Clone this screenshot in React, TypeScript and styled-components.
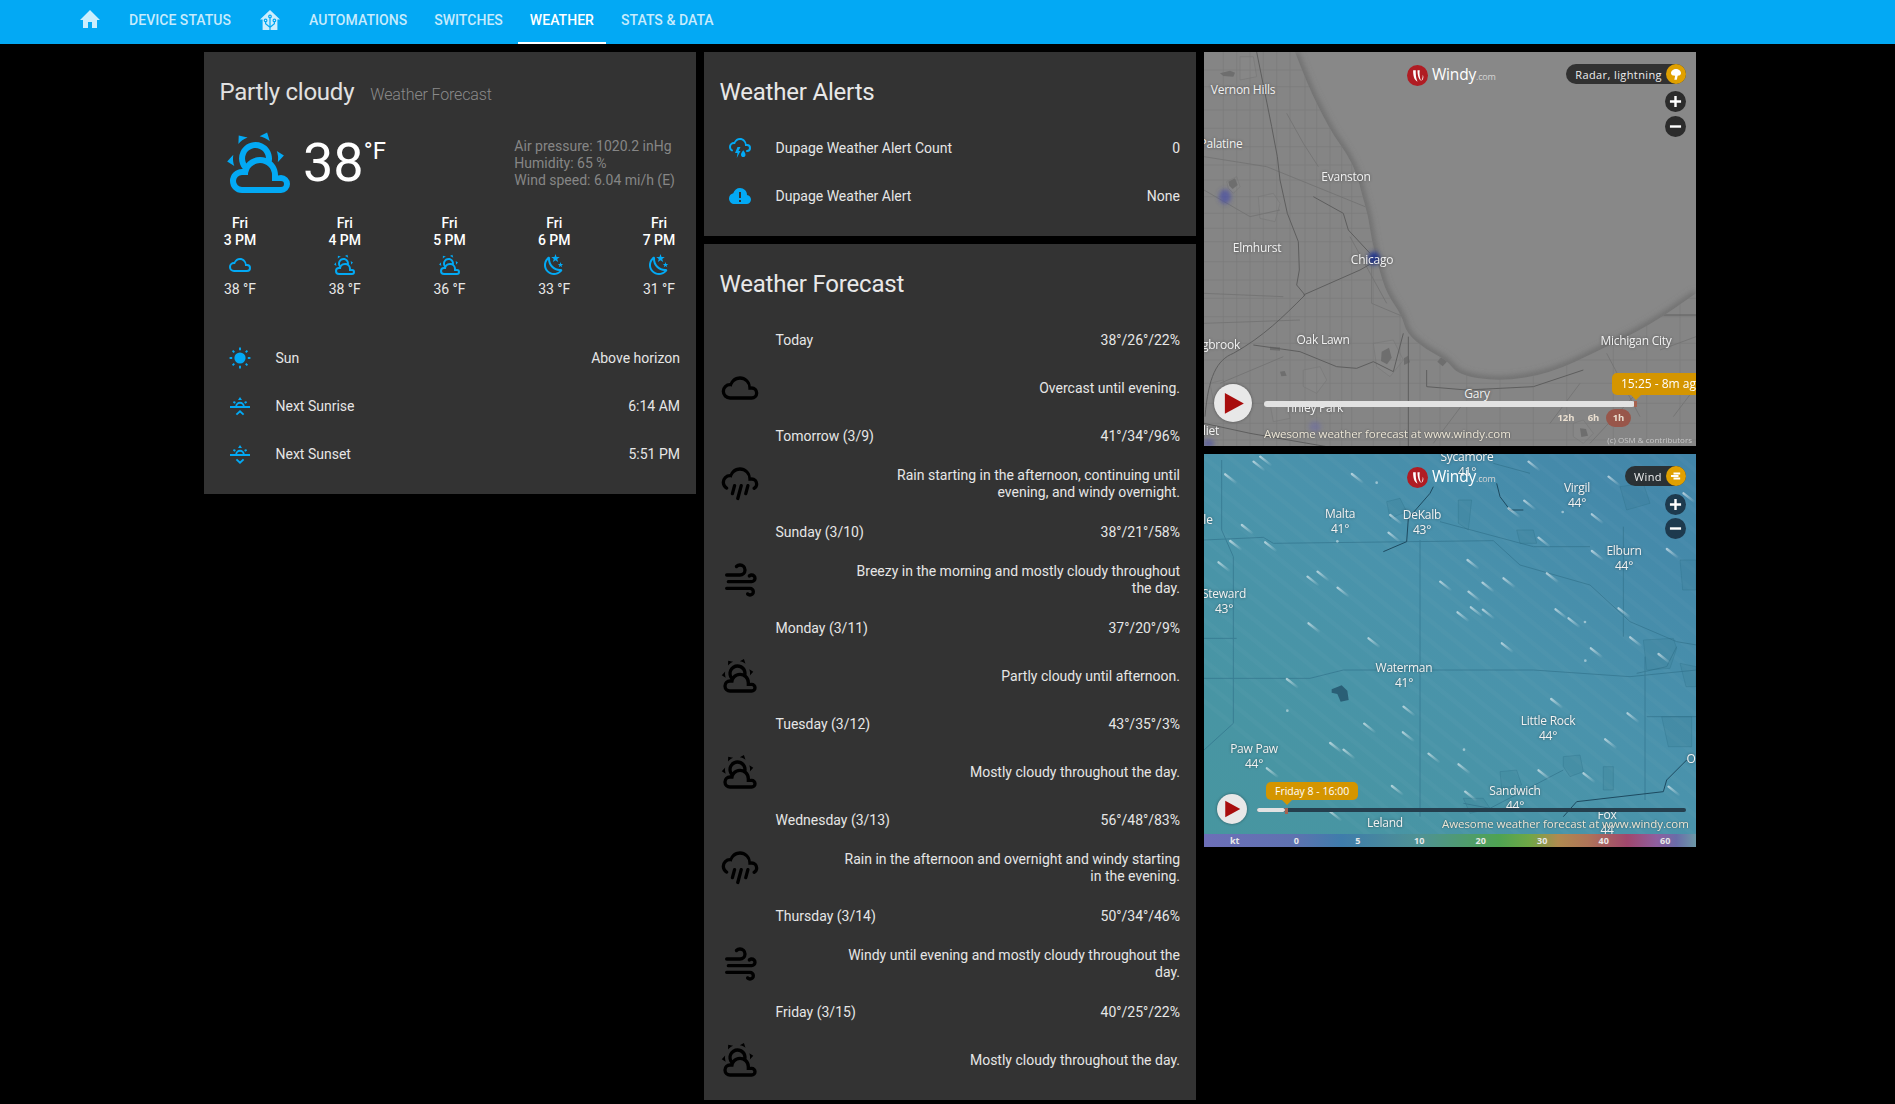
import React from 'react'
import styled, { createGlobalStyle } from 'styled-components'

const GlobalStyle = createGlobalStyle`
  html, body {
    margin: 0;
    padding: 0;
    background: #000;
    overflow: hidden;
    font-family: Roboto, "Liberation Sans", sans-serif;
  }
`

const Page = styled.div`
  width: 1895px;
  height: 1104px;
  background: #000;
  color: #e1e1e1;
`

const Header = styled.div`
  height: 44px;
  padding-left: 66px;
  background: #03a9f4;
  display: flex;
  gap: 3px;
`

const Tab = styled.div<{ $active?: boolean }>`
  box-sizing: border-box;
  height: 44px;
  padding: 0 12px 2px;
  display: flex;
  align-items: center;
  font-size: 14px;
  font-weight: 500;
  letter-spacing: 0.04px;
  text-transform: uppercase;
  color: ${p => (p.$active ? '#fff' : 'rgba(255, 255, 255, 0.78)')};
  border-bottom: 2px solid ${p => (p.$active ? '#fff' : 'transparent')};
  svg {
    display: block;
    width: 24px;
    height: 24px;
    fill: rgba(255, 255, 255, 0.8);
  }
`

const Columns = styled.div`
  display: grid;
  grid-template-columns: repeat(3, 492px);
  gap: 8px;
  padding: 8px 0 0 204px;
`

const Column = styled.div`
  display: flex;
  flex-direction: column;
  gap: 8px;
`

const Card = styled.div`
  background: #333;
  padding-bottom: 16px;
`

const CardTitle = styled.div`
  padding: 24px 16px 16px 15.5px;
  font-size: 24px;
  letter-spacing: -0.2px;
  line-height: 32px;
  color: #e8e8e8;
`

const WeatherHead = styled.div`
  display: flex;
  align-items: baseline;
  padding: 24px 16px 0 15.5px;
  line-height: 32px;
`

const Condition = styled.div`
  font-size: 24px;
  letter-spacing: -0.25px;
  color: #e1e1e1;
`

const WeatherName = styled.div`
  margin-left: 16px;
  font-size: 16px;
  letter-spacing: -0.15px;
  font-weight: 300;
  color: #8a8a8a;
`

const WeatherMain = styled.div`
  display: flex;
  align-items: center;
  height: 72px;
  margin-top: 16px;
  padding: 0 21px 0 20px;
`

const BigIcon = styled.svg`
  width: 72px;
  height: 72px;
  fill: #03a9f4;
`

const BigTemp = styled.div`
  margin-left: 7px;
  font-size: 54px;
  font-weight: 400;
  line-height: 64px;
  color: #fff;
`

const BigUnit = styled.sup`
  font-size: 24px;
  line-height: 0;
  vertical-align: 22px;
`

const Attributes = styled.div`
  margin-left: auto;
  font-size: 14px;
  font-weight: 400;
  line-height: 17px;
  color: #868686;
`

const Hourly = styled.div`
  display: flex;
  justify-content: space-between;
  margin-top: 16px;
  padding: 0 16px 0 15px;
`

const Hour = styled.div`
  display: flex;
  flex-direction: column;
  align-items: center;
  width: 42px;
  font-size: 14px;
  line-height: 17px;
`

const HourLabel = styled.div`
  font-weight: 500;
  color: #fff;
  text-align: center;
  white-space: nowrap;
`

const HourIcon = styled.svg`
  width: 24px;
  height: 24px;
  margin-top: 4px;
  fill: #03a9f4;
`

const HourTemp = styled.div`
  margin-top: 4px;
  color: #e8e8e8;
  white-space: nowrap;
`

const Rows = styled.div`
  padding: 0 16px;
`

const SunRows = styled(Rows)`
  margin-top: 36px;
`

const Row = styled.div`
  display: flex;
  align-items: center;
  height: 48px;
  font-size: 14px;
  line-height: 17px;
  color: #e6e6e6;
`

const RowIcon = styled.div<{ $dark?: boolean }>`
  flex: 0 0 40px;
  display: flex;
  justify-content: center;
  svg {
    width: ${p => (p.$dark ? '40px' : '24px')};
    height: ${p => (p.$dark ? '40px' : '24px')};
    fill: ${p => (p.$dark ? '#000' : '#03a9f4')};
  }
`

const RowName = styled.div`
  flex: 1;
  margin-left: 15.5px;
  white-space: nowrap;
`

const RowValue = styled.div`
  max-width: 336px;
  text-align: right;
`

const MapFrame = styled.div<{ $height: number }>`
  position: relative;
  overflow: hidden;
  height: ${p => p.$height}px;
  font-family: "Open Sans", sans-serif;
  svg.map {
    display: block;
    width: 100%;
    height: 100%;
  }
`

const MapLabel = styled.div<{ $x: number; $y: number }>`
  position: absolute;
  left: ${p => p.$x}px;
  top: ${p => p.$y}px;
  transform: translate(-50%, -50%);
  font-size: 12px;
  letter-spacing: -0.25px;
  line-height: 15px;
  text-align: center;
  white-space: pre;
  color: #f1f1f1;
  text-shadow: 0 0 3px rgba(0, 0, 0, 0.45);
`

const Logo = styled.div<{ $top: number }>`
  position: absolute;
  left: 203px;
  top: ${p => p.$top}px;
  display: flex;
  align-items: baseline;
  color: #fff;
  font-size: 15.5px;
  letter-spacing: -0.2px;
  line-height: 22px;
  svg {
    align-self: center;
    width: 21px;
    height: 21px;
    margin-right: 4px;
  }
  small {
    font-size: 9px;
    color: #d5d5d5;
  }
`

const LayerPill = styled.div<{ $top: number }>`
  position: absolute;
  right: 10px;
  top: ${p => p.$top}px;
  height: 20px;
  display: flex;
  align-items: center;
  padding-left: 9px;
  border-radius: 10px;
  background: rgba(40, 40, 40, 0.9);
  color: #eee;
  font-size: 11px;
  letter-spacing: 0.4px;
  svg {
    width: 20px;
    height: 20px;
    margin-left: 4px;
  }
`

const ZoomButton = styled.div<{ $top: number; $bg: string }>`
  position: absolute;
  right: 10px;
  top: ${p => p.$top}px;
  width: 21px;
  height: 21px;
  border-radius: 50%;
  background: ${p => p.$bg};
  display: flex;
  align-items: center;
  justify-content: center;
  svg {
    width: 13px;
    height: 13px;
  }
`

const PlayButton = styled.div<{ $x: number; $y: number; $size: number }>`
  position: absolute;
  left: ${p => p.$x}px;
  top: ${p => p.$y}px;
  width: ${p => p.$size}px;
  height: ${p => p.$size}px;
  border-radius: 50%;
  background: #e8e8e8;
  box-shadow: 0 0 3px rgba(0, 0, 0, 0.4);
  display: flex;
  align-items: center;
  justify-content: center;
  svg {
    width: 60%;
    height: 60%;
  }
`

const Track = styled.div<{ $x: number; $y: number; $w: number; $h: number; $bg: string }>`
  position: absolute;
  left: ${p => p.$x}px;
  top: ${p => p.$y}px;
  width: ${p => p.$w}px;
  height: ${p => p.$h}px;
  border-radius: ${p => p.$h / 2}px;
  background: ${p => p.$bg};
`

const TimeBubble = styled.div<{ $x: number; $y: number; $size: number; $height: number; $arrow: number }>`
  position: absolute;
  left: ${p => p.$x}px;
  top: ${p => p.$y}px;
  padding: 0 9px;
  height: ${p => p.$height}px;
  line-height: ${p => p.$height}px;
  border-radius: 5px;
  background: #d49500;
  color: #fff;
  font-size: ${p => p.$size}px;
  white-space: nowrap;
  &::after {
    content: '';
    position: absolute;
    left: ${p => p.$arrow}px;
    bottom: -5px;
    border: 5px solid transparent;
    border-bottom: 0;
    border-top-color: #d49500;
  }
`

const Marker = styled.div<{ $x: number; $y: number }>`
  position: absolute;
  left: ${p => p.$x}px;
  top: ${p => p.$y}px;
  width: 3px;
  height: 6px;
  background: #a5624f;
`

const RangeRow = styled.div`
  position: absolute;
  left: 347px;
  top: 357px;
  display: flex;
  align-items: center;
  color: #eadfd0;
  font-size: 9.5px;
  font-weight: 700;
`

const RangeItem = styled.div<{ $w: number; $active?: boolean }>`
  width: ${p => p.$w}px;
  height: 18px;
  line-height: 18px;
  text-align: center;
  border-radius: 9px;
  background: ${p => (p.$active ? '#98564a' : 'transparent')};
`

const Promo = styled.div<{ $x: number; $y: number }>`
  position: absolute;
  left: ${p => p.$x}px;
  top: ${p => p.$y}px;
  font-size: 11.5px;
  letter-spacing: -0.07px;
  line-height: 14px;
  color: #ece6d6;
  white-space: nowrap;
  text-shadow: 0 0 2px rgba(0, 0, 0, 0.5);
`

const Attribution = styled.div`
  position: absolute;
  right: 4px;
  bottom: 0;
  font-size: 8px;
  line-height: 12px;
  color: #c8c8c8;
`

const Legend = styled.div`
  position: absolute;
  left: 0;
  right: 0;
  bottom: 0;
  height: 13px;
  display: flex;
  background: linear-gradient(90deg, #6d6fb8 0%, #5f72b0 18%, #3f7cab 28%, #4f9293 44%, #4fa352 60%, #6ea846 66%, #b08a50 72%, #ae7458 78%, #a0476d 86%, #8f5f9f 92%, #6a6ca8 96%, #6d99a8 100%);
`

const LegendItem = styled.div`
  flex: 1;
  font-size: 9px;
  font-weight: 700;
  line-height: 13px;
  text-align: center;
  color: #e8e8e8;
`

const P = {
  home: 'M10,20V14H14V20H19V12H22L12,2L2,12H5V20H10Z',
  partly:
    'M12.74,5.47C15.1,6.5 16.35,9.03 15.92,11.46C17.19,12.56 18,14.19 18,16V16.17C18.31,16.06 18.65,16 19,16A3,3 0 0,1 22,19A3,3 0 0,1 19,22H6A4,4 0 0,1 2,18A4,4 0 0,1 6,14H6.27C5,12.45 4.6,10.24 5.5,8.26C6.72,5.5 9.97,4.24 12.74,5.47M11.93,7.3C10.16,6.5 8.09,7.31 7.31,9.07C6.85,10.09 6.93,11.22 7.41,12.13C8.5,10.83 10.16,10 12,10C12.7,10 13.38,10.12 14,10.34C13.94,9.06 13.18,7.86 11.93,7.3M13.55,3.64C13,3.4 12.45,3.23 11.88,3.12L14.37,1.82L15.27,4.71C14.76,4.29 14.19,3.93 13.55,3.64M6.09,4.44C5.6,4.79 5.17,5.19 4.8,5.63L4.91,2.82L7.87,3.5C7.25,3.71 6.65,4.03 6.09,4.44M18,9.71C17.91,9.12 17.78,8.55 17.59,8L19.97,9.5L17.92,11.73C18.03,11.08 18.05,10.4 18,9.71M3.04,11.3C3.11,11.9 3.24,12.47 3.43,13L1.06,11.5L3.1,9.28C3,9.93 2.97,10.61 3.04,11.3M19,18H16V16A4,4 0 0,0 12,12A4,4 0 0,0 8,16H6A2,2 0 0,0 4,18A2,2 0 0,0 6,20H19A1,1 0 0,0 20,19A1,1 0 0,0 19,18Z',
  cloudy:
    'M6,19A5,5 0 0,1 1,14A5,5 0 0,1 6,9C7,6.65 9.3,5 12,5C15.43,5 18.24,7.66 18.5,11.03L19,11A4,4 0 0,1 23,15A4,4 0 0,1 19,19H6M19,13H17V12A5,5 0 0,0 12,7C9.5,7 7.45,8.82 7.06,11.19C6.73,11.07 6.37,11 6,11A3,3 0 0,0 3,14A3,3 0 0,0 6,17H19A2,2 0 0,0 21,15A2,2 0 0,0 19,13Z',
  night:
    'M17.75,4.09L15.22,6.03L16.13,9.09L13.5,7.28L10.87,9.09L11.78,6.03L9.25,4.09L12.44,4L13.5,1L14.56,4L17.75,4.09M21.25,11L19.61,12.25L20.2,14.23L18.5,13.06L16.8,14.23L17.39,12.25L15.75,11L17.81,10.95L18.5,9L19.19,10.95L21.25,11M18.97,15.95C19.8,15.87 20.69,17.05 20.16,17.8C19.84,18.25 19.5,18.67 19.08,19.07C15.17,23 8.84,23 4.94,19.07C1.03,15.17 1.03,8.83 4.94,4.93C5.34,4.53 5.76,4.17 6.21,3.85C6.96,3.32 8.14,4.21 8.06,5.04C7.79,7.9 8.75,10.87 10.95,13.06C13.14,15.26 16.1,16.22 18.97,15.95M17.33,17.97C14.5,17.81 11.7,16.64 9.53,14.5C7.36,12.31 6.2,9.5 6.04,6.68C3.23,9.82 3.34,14.64 6.35,17.66C9.37,20.67 14.19,20.78 17.33,17.97Z',
  pouring:
    'M9,12C9.53,12.14 9.85,12.69 9.71,13.22L8.41,18.05C8.27,18.59 7.72,18.9 7.19,18.76C6.65,18.62 6.34,18.07 6.5,17.54L7.78,12.71C7.92,12.17 8.47,11.86 9,12M13,12C13.53,12.14 13.85,12.69 13.71,13.22L11.64,20.95C11.5,21.5 10.95,21.8 10.41,21.66C9.88,21.5 9.56,20.97 9.7,20.43L11.78,12.71C11.92,12.17 12.47,11.86 13,12M17,12C17.53,12.14 17.85,12.69 17.71,13.22L16.41,18.05C16.27,18.59 15.72,18.9 15.19,18.76C14.65,18.62 14.34,18.07 14.5,17.54L15.78,12.71C15.92,12.17 16.47,11.86 17,12M17,10V9A5,5 0 0,0 12,4C9.5,4 7.45,5.82 7.06,8.19C6.73,8.07 6.37,8 6,8A3,3 0 0,0 3,11C3,12.11 3.6,13.08 4.5,13.6V13.59C5,13.87 5.14,14.5 4.87,14.96C4.59,15.43 4,15.6 3.5,15.32V15.33C2,14.47 1,12.85 1,11A5,5 0 0,1 6,6C7,3.65 9.3,2 12,2C15.43,2 18.24,4.66 18.5,8.03L19,8A4,4 0 0,1 23,12C23,13.5 22.2,14.77 21,15.46V15.46C20.5,15.73 19.91,15.57 19.63,15.09C19.36,14.61 19.5,14 20,13.72V13.73C20.6,13.39 21,12.74 21,12A2,2 0 0,0 19,10H17Z',
  windy:
    'M4,10A1,1 0 0,1 3,9A1,1 0 0,1 4,8H12A2,2 0 0,0 14,6A2,2 0 0,0 12,4C11.45,4 10.95,4.22 10.59,4.59C10.2,5 9.56,5 9.17,4.59C8.78,4.2 8.78,3.56 9.17,3.17C9.9,2.45 10.9,2 12,2A4,4 0 0,1 16,6A4,4 0 0,1 12,10H4M19,12A1,1 0 0,0 20,11A1,1 0 0,0 19,10C18.72,10 18.47,10.11 18.29,10.29C17.9,10.68 17.27,10.68 16.88,10.29C16.5,9.9 16.5,9.27 16.88,8.88C17.42,8.34 18.17,8 19,8A3,3 0 0,1 22,11A3,3 0 0,1 19,14H5A1,1 0 0,1 4,13A1,1 0 0,1 5,12H19M18,18H4A1,1 0 0,1 3,17A1,1 0 0,1 4,16H18A3,3 0 0,1 21,19A3,3 0 0,1 18,22C17.17,22 16.42,21.66 15.88,21.12C15.5,20.73 15.5,20.1 15.88,19.71C16.27,19.32 16.9,19.32 17.29,19.71C17.47,19.89 17.72,20 18,20A1,1 0 0,0 19,19A1,1 0 0,0 18,18Z',
  storm:
    'M4.5,13.59C5,13.87 5.14,14.5 4.87,14.96C4.59,15.44 4,15.6 3.5,15.33V15.33C2,14.47 1,12.85 1,11A5,5 0 0,1 6,6C7,3.65 9.3,2 12,2C15.43,2 18.24,4.66 18.5,8.03L19,8A4,4 0 0,1 23,12A4,4 0 0,1 19,16A1,1 0 0,1 18,15A1,1 0 0,1 19,14A2,2 0 0,0 21,12A2,2 0 0,0 19,10H17V9A5,5 0 0,0 12,4C9.5,4 7.45,5.82 7.06,8.19C6.73,8.07 6.37,8 6,8A3,3 0 0,0 3,11C3,12.11 3.6,13.08 4.5,13.6V13.59M9.5,11H12.5L10.5,15H12.5L8.75,22L9.5,17H7L9.5,11M17.5,18.67C17.5,19.96 16.5,21 15.25,21C14,21 13,19.96 13,18.67C13,17 15.25,14.25 15.25,14.25C15.25,14.25 17.5,17 17.5,18.67Z',
  cloudAlert:
    'M6.5,20C4.98,20 3.68,19.48 2.61,18.43C1.54,17.38 1,16.1 1,14.58C1,13.28 1.39,12.12 2.17,11.1C2.95,10.08 3.98,9.43 5.25,9.15C5.67,7.62 6.5,6.38 7.75,5.43C9,4.48 10.42,4 12,4C13.95,4 15.6,4.68 16.96,6.04C18.32,7.4 19,9.05 19,11C20.15,11.13 21.1,11.63 21.86,12.5C22.62,13.35 23,14.35 23,15.5C23,16.75 22.56,17.81 21.69,18.69C20.82,19.56 19.75,20 18.5,20H6.5M11,8V14H13V8H11M11,16V18H13V16H11Z',
}

const Icon = ({ d }: { d: string }) => (
  <svg viewBox="0 0 24 24">
    <path d={d} fillRule="evenodd" />
  </svg>
)

const HomeAutomationIcon = () => (
  <svg viewBox="0 0 24 24">
    <path d="M12 2L2 11.6H4.6V22H19.4V11.6H22Z" />
    <g fill="none" stroke="#03a9f4" strokeWidth="1.2">
      <circle cx="12" cy="8.4" r="1.3" />
      <circle cx="7.6" cy="12.4" r="1.3" />
      <circle cx="16.4" cy="12.4" r="1.3" />
      <path d="M12 9.7V22M7.6 13.7V15.6L11.6 19M16.4 13.7V15.6L12.4 19" />
    </g>
  </svg>
)

const SunIcon = () => (
  <svg viewBox="0 0 24 24">
    <circle cx="12" cy="12" r="5.6" />
    <g stroke="#03a9f4" strokeWidth="1.9">
      <path d="M12 1.6V4.2M12 19.8V22.4M1.6 12H4.2M19.8 12H22.4M4.6 4.6L6.3 6.3M17.7 17.7L19.4 19.4M4.6 19.4L6.3 17.7M17.7 6.3L19.4 4.6" />
    </g>
  </svg>
)

const SunsetIcon = ({ up }: { up?: boolean }) => (
  <svg viewBox="0 0 24 24">
    <g stroke="#03a9f4" strokeWidth="1.9" fill="none">
      <path d="M2 13H22" strokeWidth="2" />
      <path d="M8.2 12.5A3.8 3.8 0 0 1 15.8 12.5" />
      <path d="M5.4 7.8L7.4 8.9M18.6 7.8L16.6 8.9" />
      <path d={up ? 'M8.4 20.6L12 17.2L15.6 20.6' : 'M8.4 17.4L12 20.8L15.6 17.4'} />
    </g>
    <path d="M12 3L14 6H10Z" />
  </svg>
)

const hours = [
  { time: '3 PM', icon: P.cloudy, temp: '38 °F' },
  { time: '4 PM', icon: P.partly, temp: '38 °F' },
  { time: '5 PM', icon: P.partly, temp: '36 °F' },
  { time: '6 PM', icon: P.night, temp: '33 °F' },
  { time: '7 PM', icon: P.night, temp: '31 °F' },
]

const forecast = [
  { day: 'Today', temps: '38°/26°/22%', icon: P.cloudy, text: 'Overcast until evening.' },
  { day: 'Tomorrow (3/9)', temps: '41°/34°/96%', icon: P.pouring, text: 'Rain starting in the afternoon, continuing until evening, and windy overnight.' },
  { day: 'Sunday (3/10)', temps: '38°/21°/58%', icon: P.windy, text: 'Breezy in the morning and mostly cloudy throughout the day.' },
  { day: 'Monday (3/11)', temps: '37°/20°/9%', icon: P.partly, text: 'Partly cloudy until afternoon.' },
  { day: 'Tuesday (3/12)', temps: '43°/35°/3%', icon: P.partly, text: 'Mostly cloudy throughout the day.' },
  { day: 'Wednesday (3/13)', temps: '56°/48°/83%', icon: P.pouring, text: 'Rain in the afternoon and overnight and windy starting in the evening.' },
  { day: 'Thursday (3/14)', temps: '50°/34°/46%', icon: P.windy, text: 'Windy until evening and mostly cloudy throughout the day.' },
  { day: 'Friday (3/15)', temps: '40°/25°/22%', icon: P.partly, text: 'Mostly cloudy throughout the day.' },
]

const radarLabels = [
  { x: 39, y: 37, t: 'Vernon Hills' },
  { x: 17, y: 91, t: 'Palatine' },
  { x: 142, y: 124, t: 'Evanston' },
  { x: 53, y: 195, t: 'Elmhurst' },
  { x: 168, y: 207, t: 'Chicago' },
  { x: 119, y: 287, t: 'Oak Lawn' },
  { x: 17, y: 292, t: 'gbrook' },
  { x: 432, y: 288, t: 'Michigan City' },
  { x: 273, y: 341, t: 'Gary' },
  { x: 7, y: 378, t: 'liet' },
]

const windLabels = [
  { x: 263, y: 10, t: 'Sycamore\n41°' },
  { x: 136, y: 67, t: 'Malta\n41°' },
  { x: 218, y: 68, t: 'DeKalb\n43°' },
  { x: 373, y: 41, t: 'Virgil\n44°' },
  { x: 420, y: 104, t: 'Elburn\n44°' },
  { x: 20, y: 147, t: 'Steward\n43°' },
  { x: 200, y: 221, t: 'Waterman\n41°' },
  { x: 344, y: 274, t: 'Little Rock\n44°' },
  { x: 50, y: 302, t: 'Paw Paw\n44°' },
  { x: 311, y: 344, t: 'Sandwich\n44°' },
  { x: 181, y: 368, t: 'Leland' },
  { x: 403, y: 368, t: 'Fox\n44' },
  { x: 4, y: 65, t: 'le' },
  { x: 487, y: 304, t: 'O' },
]

// quadratic curve through the midpoints, so coast lines don't look like polygons
const smooth = (pts: number[][]) => {
  let d = `M${pts[0][0]} ${pts[0][1]}`
  for (let i = 1; i < pts.length - 1; i++) {
    const mx = (pts[i][0] + pts[i + 1][0]) / 2
    const my = (pts[i][1] + pts[i + 1][1]) / 2
    d += `Q${pts[i][0]} ${pts[i][1]} ${mx} ${my}`
  }
  return d + `L${pts[pts.length - 1][0]} ${pts[pts.length - 1][1]}`
}

// coordinates below are in the 3x space of the reference crop
const coast = [
  [285, 6], [310, 70], [335, 130], [370, 200], [400, 255], [440, 310], [470, 370], [485, 430], [505, 500], [515, 570],
  [535, 650], [560, 730], [605, 795], [620, 850], [680, 900], [740, 930], [775, 975], [900, 995], [1050, 970], [1200, 900],
  [1350, 825], [1488, 730],
]
const lake = `${smooth(coast)}V6Z`

const radarRoads = [
  'M170 6L195 130L215 230L232 320L240 390L262 490L295 575L298 660L290 705L315 735',
  'M315 735C250 800 190 860 100 910C50 930 25 980 15 1100',
  'M310 735L480 660L515 640',
  'M160 885L300 905L410 950L470 955L520 935L580 965L610 850',
  'M340 440L430 490L445 540L510 610',
  'M625 860V1190',
  'M680 960V1010L800 1020L1000 1010L1150 960',
  'M12 1120L150 1150L380 1190',
  'M1390 795H1490',
]

const radarMinor = [
  'M12 320L200 350L520 480', 'M515 640V760L610 800', 'M1050 1120L1140 1000', 'M1170 1180L1300 1040', 'M12 730L250 740',
  'M12 820L300 810', 'M60 1000L250 920', 'M700 1180L790 1060', 'M1220 910L1320 1100', 'M1380 900L1488 860', 'M1420 1100L1488 1010',
  'M260 190L310 280L355 350', 'M450 560L560 760', 'M12 420L150 500L240 480',
]

const gridX = [70, 110, 150, 190, 230, 270, 315, 350, 390, 425, 455, 520, 600, 660, 720, 800, 900, 1000, 1100, 1240, 1340, 1440]
const gridY = [60, 110, 180, 235, 290, 345, 390, 440, 490, 535, 575, 635, 690, 745, 800, 880, 930, 1000, 1060, 1120, 1170]

const towns = [
  'M175 440l45 -10 20 30 -15 55 -45 -10z',
  'M80 395l30 -15 10 30 -20 20 -15 -15z',
  'M310 960l50 -10 20 40 -30 40 -40 -20z',
  'M210 1060l50 -5 10 50 -50 10z',
  'M520 880l60 -10 30 60 -40 50 -40 -30z',
  'M1120 1120l30 -10 30 40 -30 30 -30 -20z',
  'M30 1000l40 -10 10 50 -40 10z',
  'M120 20l40 0 10 60 -50 10z',
]

const patches = [
  'M60 70l30 -8 15 6 -5 12 -30 -2z',
  'M85 395l20 -10 8 20 -15 12 -10 -10z',
  'M545 905l22 -12 8 30 -14 20 -18 -10z',
  'M612 925l12 -8 6 20 -18 8z',
  'M712 935l26 -30 18 14 -28 30z',
  'M210 890l30 2 0 10 -30 -2z',
  'M1140 1135l18 2 6 20 -20 4z',
  'M240 965l14 -2 6 14 -16 2z',
]

const windRoads = [
  'M12 270L190 262L220 280L880 272L960 345L1170 405L1290 515L1430 575L1490 585',
  'M65 30V240L100 320V820L12 900',
  'M660 270V1100',
  'M12 685H330L430 660H1000L1290 680L1490 660',
  'M720 215L1000 290H1170',
  'M1270 230V560',
  'M1335 620V1050',
  'M1340 800H1490',
  'M1430 590L1400 650L1310 670',
  'M790 1060L870 1075L1090 960',
  'M880 40L990 70',
  'M12 565H110',
]

const windPatches = [
  'M1330 570l90 -5 10 30 -20 60 -70 5z',
  'M1090 920l50 -5 10 50 -40 15 -20 -30z',
  'M900 965l50 -5 15 45 -60 10z',
  'M1210 950h30v70h-30z',
  'M790 1045l60 0 20 30 -60 15z',
  'M1385 800l90 0 0 90 -70 0z',
  'M1440 640l48 10 0 60 -30 0z',
  'M1260 110l70 -10 20 60 -70 20z',
  'M775 150l40 0 -10 90 -30 -20z',
  'M950 240l50 0 10 40 -50 0z',
  'M1440 330l48 0 0 90 -40 0z',
  'M560 155l40 -10 20 40 -50 20z',
]

const streaks = [
  [125, 220], [90, 268], [195, 272], [55, 332], [322, 375], [352, 360], [412, 408], [325, 515], [505, 560],
  [260, 682], [492, 816], [608, 842], [390, 874], [430, 894], [575, 1003], [685, 906], [775, 938],
  [795, 1020], [1015, 956], [1150, 965], [1215, 863], [1282, 785], [1053, 742], [905, 575], [1172, 590], [1066, 473],
  [1105, 500], [772, 482], [812, 467], [848, 474], [805, 420], [847, 393], [910, 380], [720, 390], [802, 325],
  [1175, 298], [1400, 292], [1040, 365], [1255, 470], [1290, 557], [1375, 607], [972, 147], [1175, 188], [925, 170],
  [1015, 258], [570, 190], [565, 243], [455, 67], [160, 30], [180, 15], [75, 68], [1225, 75], [1450, 125],
  [200, 950], [1405, 1005], [610, 765], [390, 1080], [985, 30],
]

const dots = [[530, 98], [1088, 186], [1155, 516], [1156, 632], [792, 899], [262, 782], [412, 274]]

const stripes = Array.from({ length: 34 }, (_, i) => -900 + i * 75)

const RadarMap = () => (
  <svg className="map" viewBox="12 6 1476 1182" preserveAspectRatio="none">
    <defs>
      <filter id="shore" x="-10%" y="-10%" width="120%" height="120%">
        <feGaussianBlur stdDeviation="9" />
      </filter>
      <filter id="rain">
        <feGaussianBlur stdDeviation="7" />
      </filter>
      <clipPath id="lakeClip">
        <path d={lake} />
      </clipPath>
    </defs>
    <rect x="12" y="6" width="1476" height="1182" fill="#858585" />
    <g fill="#878787" stroke="#797979" strokeWidth="2">
      {towns.map(d => (
        <path key={d} d={d} />
      ))}
    </g>
    <g stroke="#777" strokeWidth="2" opacity="0.7">
      {gridX.map(x => (
        <path key={x} d={`M${x} 6V1188`} />
      ))}
      {gridY.map(y => (
        <path key={y} d={`M12 ${y}H1488`} />
      ))}
    </g>
    <g fill="none" stroke="#727272" strokeWidth="2.5">
      {radarMinor.map(d => (
        <path key={d} d={d} />
      ))}
    </g>
    <g fill="#6e6e6e">
      {patches.map(d => (
        <path key={d} d={d} />
      ))}
    </g>
    <g fill="none" stroke="#5e5e5e" strokeWidth="3">
      {radarRoads.map(d => (
        <path key={d} d={d} />
      ))}
    </g>
    <path d={lake} fill="#888888" />
    <g clipPath="url(#lakeClip)">
      <path d={smooth(coast)} fill="none" stroke="#686868" strokeWidth="16" filter="url(#shore)" />
    </g>
    <g filter="url(#rain)">
      <ellipse cx="75" cy="440" rx="18" ry="22" fill="#4a4fa5" opacity="0.7" />
      <ellipse cx="522" cy="625" rx="18" ry="20" fill="#283a90" />
      <ellipse cx="345" cy="1130" rx="18" ry="16" fill="#6a6aa8" opacity="0.5" />
      <ellipse cx="25" cy="1180" rx="18" ry="12" fill="#4a4fa5" opacity="0.6" />
    </g>
  </svg>
)

const WindMap = () => (
  <svg className="map" viewBox="12 12 1476 1179" preserveAspectRatio="none">
    <defs>
      <linearGradient id="windBg" x1="0" y1="1" x2="1" y2="0">
        <stop offset="0" stopColor="#47969f" />
        <stop offset="0.55" stopColor="#4a93ac" />
        <stop offset="1" stopColor="#4285a9" />
      </linearGradient>
      <linearGradient id="streak">
        <stop offset="0" stopColor="#fff" stopOpacity="0.6" />
        <stop offset="1" stopColor="#fff" stopOpacity="0" />
      </linearGradient>
    </defs>
    <rect x="12" y="12" width="1476" height="1179" fill="url(#windBg)" />
    <g stroke="#fff" strokeOpacity="0.025" strokeWidth="14">
      {stripes.map(s => (
        <path key={s} d={`M${s} 12L${s + 1450} 1190`} />
      ))}
    </g>
    <g fill="#2f6f88" fillOpacity="0.14" stroke="#2f6f88" strokeOpacity="0.4" strokeWidth="2.5">
      {windPatches.map(d => (
        <path key={d} d={d} />
      ))}
    </g>
    <g fill="none" stroke="#2f6f88" strokeWidth="3" opacity="0.6">
      {windRoads.map(d => (
        <path key={d} d={d} />
      ))}
    </g>
    <path d="M395 718L425 706L442 722L446 750L422 755L412 732L395 728Z" fill="#2a5f76" />
    <g fill="none" stroke="#1d4a60" strokeWidth="3">
      <path d="M550 305L620 275L625 205L690 130L700 110" />
      <path d="M890 100L900 140L930 180H970" />
      <path d="M1090 1100L1130 1055L1390 1025L1400 990L1460 930" />
    </g>
    {streaks.map(([x, y]) => (
      <rect key={`${x}-${y}`} x={x} y={y} width="48" height="7" rx="3.5" fill="url(#streak)" transform={`rotate(38 ${x} ${y})`} />
    ))}
    <g fill="#fff" fillOpacity="0.45">
      {dots.map(([x, y]) => (
        <circle key={`${x}-${y}`} cx={x} cy={y} r="4" />
      ))}
    </g>
  </svg>
)

const WindyLogo = ({ top }: { top: number }) => (
  <Logo $top={top}>
    <svg viewBox="0 0 24 24">
      <circle cx="12" cy="12" r="12" fill="#b01c23" />
      <path d="M7 6C7 12 8 17 12 19C10 15 10 10 10 6ZM12 6C12 11 13 16 16 18C14.5 14 14 10 14.5 6ZM18 11C18 14 17.5 16.5 16 18C18.5 17 19.5 14 18 11Z" fill="#fff" />
    </svg>
    Windy<small>.com</small>
  </Logo>
)

const PlusIcon = () => (
  <svg viewBox="0 0 14 14">
    <path d="M7 1V13M1 7H13" stroke="#fff" strokeWidth="2.6" />
  </svg>
)

const MinusIcon = () => (
  <svg viewBox="0 0 14 14">
    <path d="M1 7H13" stroke="#fff" strokeWidth="2.6" />
  </svg>
)

const PlayIcon = () => (
  <svg viewBox="0 0 24 24">
    <path d="M3 1L23 12L3 23Z" fill="#a80d0d" />
  </svg>
)

const App: React.FunctionComponent = () => {
  return (
    <Page>
      <GlobalStyle />
      <Header>
        <Tab>
          <Icon d={P.home} />
        </Tab>
        <Tab>Device Status</Tab>
        <Tab>
          <HomeAutomationIcon />
        </Tab>
        <Tab>Automations</Tab>
        <Tab>Switches</Tab>
        <Tab $active>Weather</Tab>
        <Tab>Stats &amp; Data</Tab>
      </Header>
      <Columns>
        <Column>
          <Card>
            <WeatherHead>
              <Condition>Partly cloudy</Condition>
              <WeatherName>Weather Forecast</WeatherName>
            </WeatherHead>
            <WeatherMain>
              <BigIcon viewBox="0 0 24 24">
                <path d={P.partly} fillRule="evenodd" />
              </BigIcon>
              <BigTemp>
                38<BigUnit>°F</BigUnit>
              </BigTemp>
              <Attributes>
                Air pressure: 1020.2 inHg
                <br />
                Humidity: 65 %
                <br />
                Wind speed: 6.04 mi/h (E)
              </Attributes>
            </WeatherMain>
            <Hourly>
              {hours.map(h => (
                <Hour key={h.time}>
                  <HourLabel>
                    Fri
                    <br />
                    {h.time}
                  </HourLabel>
                  <HourIcon viewBox="0 0 24 24">
                    <path d={h.icon} fillRule="evenodd" />
                  </HourIcon>
                  <HourTemp>{h.temp}</HourTemp>
                </Hour>
              ))}
            </Hourly>
            <SunRows>
              <Row>
                <RowIcon>
                  <SunIcon />
                </RowIcon>
                <RowName>Sun</RowName>
                <RowValue>Above horizon</RowValue>
              </Row>
              <Row>
                <RowIcon>
                  <SunsetIcon up />
                </RowIcon>
                <RowName>Next Sunrise</RowName>
                <RowValue>6:14 AM</RowValue>
              </Row>
              <Row>
                <RowIcon>
                  <SunsetIcon />
                </RowIcon>
                <RowName>Next Sunset</RowName>
                <RowValue>5:51 PM</RowValue>
              </Row>
            </SunRows>
          </Card>
        </Column>
        <Column>
          <Card>
            <CardTitle>Weather Alerts</CardTitle>
            <Rows>
              <Row>
                <RowIcon>
                  <Icon d={P.storm} />
                </RowIcon>
                <RowName>Dupage Weather Alert Count</RowName>
                <RowValue>0</RowValue>
              </Row>
              <Row>
                <RowIcon>
                  <Icon d={P.cloudAlert} />
                </RowIcon>
                <RowName>Dupage Weather Alert</RowName>
                <RowValue>None</RowValue>
              </Row>
            </Rows>
          </Card>
          <Card>
            <CardTitle>Weather Forecast</CardTitle>
            <Rows>
              {forecast.map(f => (
                <React.Fragment key={f.day}>
                  <Row>
                    <RowIcon />
                    <RowName>{f.day}</RowName>
                    <RowValue>{f.temps}</RowValue>
                  </Row>
                  <Row>
                    <RowIcon $dark>
                      <Icon d={f.icon} />
                    </RowIcon>
                    <RowName />
                    <RowValue>{f.text}</RowValue>
                  </Row>
                </React.Fragment>
              ))}
            </Rows>
          </Card>
        </Column>
        <Column>
          <MapFrame $height={394}>
            <RadarMap />
            {radarLabels.map(l => (
              <MapLabel key={l.t} $x={l.x} $y={l.y}>
                {l.t}
              </MapLabel>
            ))}
            <WindyLogo top={11} />
            <LayerPill $top={12}>
              Radar, lightning
              <svg viewBox="0 0 24 24">
                <circle cx="12" cy="12" r="12" fill="#e0a000" />
                <path d="M6 11C6 8 9 6 12 6C15 6 18 8 18 11C18 13 16 14 14 14L13 19L10 19L11 14C8 14 6 13 6 11Z" fill="#fff" />
              </svg>
            </LayerPill>
            <ZoomButton $top={39} $bg="#2b2b2b">
              <PlusIcon />
            </ZoomButton>
            <ZoomButton $top={64} $bg="#2b2b2b">
              <MinusIcon />
            </ZoomButton>
            <PlayButton $x={10} $y={332} $size={38}>
              <PlayIcon />
            </PlayButton>
            <MapLabel $x={110} $y={355}>
              Tinley Park
            </MapLabel>
            <Track $x={60} $y={349} $w={371} $h={6} $bg="#e2e2e2" />
            <Marker $x={430} $y={349} />
            <TimeBubble $x={408} $y={321} $size={12} $height={22} $arrow={19}>
              15:25 - 8m ago
            </TimeBubble>
            <RangeRow>
              <RangeItem $w={30}>12h</RangeItem>
              <RangeItem $w={25}>6h</RangeItem>
              <RangeItem $w={25} $active>
                1h
              </RangeItem>
            </RangeRow>
            <Promo $x={60} $y={375}>
              Awesome weather forecast at www.windy.com
            </Promo>
            <Attribution>(c) OSM &amp; contributors</Attribution>
          </MapFrame>
          <MapFrame $height={393}>
            <WindMap />
            {windLabels.map(l => (
              <MapLabel key={l.t} $x={l.x} $y={l.y}>
                {l.t}
              </MapLabel>
            ))}
            <WindyLogo top={11} />
            <LayerPill $top={12}>
              Wind
              <svg viewBox="0 0 24 24">
                <circle cx="12" cy="12" r="12" fill="#e0a000" />
                <path d="M6 12H15M9 9H17M9 15H17" stroke="#fff" strokeWidth="2.4" />
              </svg>
            </LayerPill>
            <ZoomButton $top={40} $bg="#1d3a4e">
              <PlusIcon />
            </ZoomButton>
            <ZoomButton $top={64} $bg="#1d3a4e">
              <MinusIcon />
            </ZoomButton>
            <PlayButton $x={13} $y={340} $size={30}>
              <PlayIcon />
            </PlayButton>
            <Track $x={53} $y={354} $w={429} $h={4} $bg="#243f4e" />
            <Track $x={53} $y={354} $w={28} $h={4} $bg="#e2e2e2" />
            <Marker $x={81} $y={354} />
            <TimeBubble $x={62} $y={328} $size={10.5} $height={18} $arrow={16}>
              Friday 8 - 16:00
            </TimeBubble>
            <Promo $x={238} $y={363}>
              Awesome weather forecast at www.windy.com
            </Promo>
            <Legend>
              {['kt', '0', '5', '10', '20', '30', '40', '60'].map(v => (
                <LegendItem key={v}>{v}</LegendItem>
              ))}
            </Legend>
          </MapFrame>
        </Column>
      </Columns>
    </Page>
  )
}

export default App
